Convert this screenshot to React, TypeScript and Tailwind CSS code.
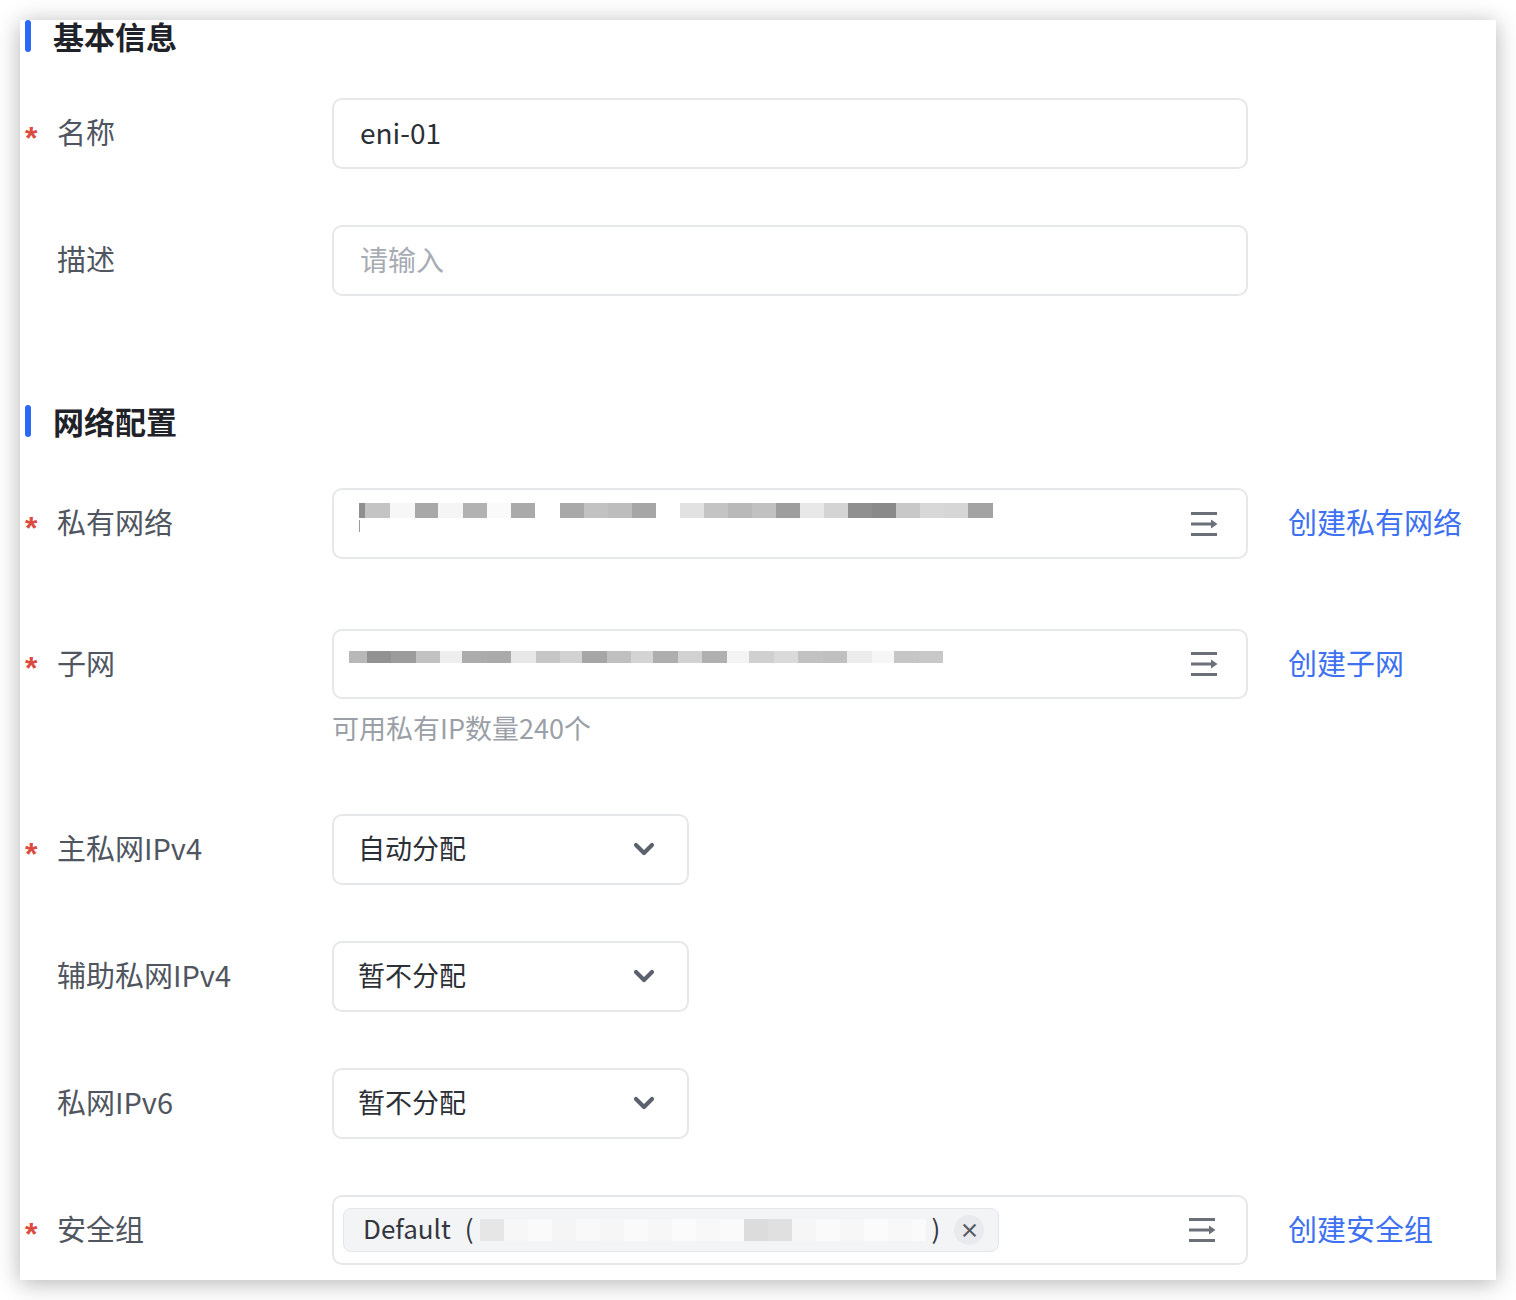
import React from "react";

type Blk = [number, string];

const vpcBlocks: Blk[] = [
  [6, "#8f8f8f"], [25, "#c4c4c4"], [25, "#f7f7f7"], [23, "#a8a8a8"], [25, "#f5f5f5"],
  [24, "#b2b2b2"], [24, "#fafafa"], [24, "#aaaaaa"], [25, "#ffffff"],
  [24, "#a9a9a9"], [24, "#c2c2c2"], [24, "#bdbdbd"], [24, "#a6a6a6"], [24, "#ffffff"],
  [24, "#e2e2e2"], [24, "#c4c4c4"], [24, "#b9b9b9"], [24, "#c1c1c1"], [24, "#9e9e9e"],
  [24, "#e8e8e8"], [24, "#d4d4d4"], [24, "#8f8f8f"], [24, "#8a8a8a"], [24, "#c8c8c8"],
  [24, "#d8d8d8"], [24, "#d6d6d6"], [25, "#a3a3a3"],
];

const subnetBlocks: Blk[] = [
  [18, "#b8b8b8"], [24, "#929292"], [25, "#9c9c9c"], [24, "#c2c2c2"], [22, "#eeeeee"],
  [25, "#acacac"], [24, "#aaaaaa"], [25, "#e8e8e8"], [24, "#c6c6c6"], [22, "#d2d2d2"],
  [25, "#a6a6a6"], [24, "#c0c0c0"], [22, "#d4d4d4"], [25, "#aeaeae"], [24, "#d2d2d2"],
  [25, "#b0b0b0"], [22, "#f4f4f4"], [25, "#d0d0d0"], [24, "#dadada"], [25, "#c2c2c2"],
  [24, "#c0c0c0"], [25, "#ececec"], [22, "#f6f6f6"], [25, "#c6c6c6"], [24, "#c8c8c8"],
];

const sgBlocks: Blk[] = [
  [24, "#e6e6e6"], [24, "#f7f7f7"], [24, "#fafafa"], [24, "#f5f5f5"], [24, "#f9f9f9"],
  [24, "#f6f6f6"], [24, "#fafafa"], [24, "#f7f7f7"], [24, "#fbfbfb"], [24, "#f8f8f8"],
  [24, "#fafafa"], [24, "#dcdcdc"], [24, "#e0e0e0"], [24, "#f6f6f6"], [24, "#fafafa"],
  [24, "#f7f7f7"], [24, "#fbfbfb"], [24, "#f8f8f8"], [14, "#fafafa"],
];

function Blocks({ data, h }: { data: Blk[]; h: string }) {
  return (
    <div className={`flex ${h}`}>
      {data.map(([w, c], i) => (
        <div key={i} className="h-full" style={{ width: w, background: c }} />
      ))}
    </div>
  );
}

function ListIcon() {
  return (
    <svg width="28" height="26" viewBox="0 0 28 26" fill="none" className="shrink-0">
      <path d="M1 2.5H27" stroke="#6a6f78" strokeWidth="3" />
      <path d="M1 13H23" stroke="#6a6f78" strokeWidth="3" />
      <path d="M21 8.5L27.5 13L21 17.5Z" fill="#6a6f78" />
      <path d="M1 23.5H27" stroke="#6a6f78" strokeWidth="3" />
    </svg>
  );
}

function Chevron() {
  return (
    <svg width="22" height="15" viewBox="0 0 22 15" fill="none" className="shrink-0">
      <path d="M3 3L11 11L19 3" stroke="#5c626d" strokeWidth="4.2" strokeLinecap="round" strokeLinejoin="round" />
    </svg>
  );
}

function Label({ req, children }: { req?: boolean; children: React.ReactNode }) {
  return (
    <div className="w-[312px] shrink-0 flex items-center pl-[5px]">
      <span className="w-[32px] shrink-0 text-[#dc4b40] text-[32px] font-['Liberation_Sans',sans-serif] font-bold leading-none relative top-[4px]">
        {req ? "*" : ""}
      </span>
      <span className="text-[29px] text-[#50565f] leading-none relative -top-[2px]">{children}</span>
    </div>
  );
}

function Header({ children }: { children: React.ReactNode }) {
  return (
    <div className="flex items-center h-[32px] shrink-0">
      <div className="w-[6px] h-[32px] bg-[#2b68f6] rounded-[3px] ml-[5px]" />
      <span className="ml-[22px] text-[31px] font-bold text-[#1f2329] leading-[28px]">{children}</span>
    </div>
  );
}

function Link({ children }: { children: React.ReactNode }) {
  return <span className="ml-[40px] text-[29px] text-[#3d71f2] leading-none relative -top-[2px]">{children}</span>;
}

function Select({ value }: { value: string }) {
  return (
    <div className="w-[357px] h-[71px] border-2 border-[#e6e7eb] rounded-[10px] flex items-center justify-between pl-[24px] pr-[32px]">
      <span className="text-[27px] text-[#2b2f36] leading-none relative -top-[2px]">{value}</span>
      <Chevron />
    </div>
  );
}

export default function App() {
  return (
    <div className="w-[1516px] h-[1300px] bg-white p-[20px] font-['Noto_Sans_CJK_SC','Noto_Sans',sans-serif]">
      <div className="w-[1476px] h-[1260px] bg-white overflow-hidden shadow-[0_3px_22px_rgba(0,0,0,0.3)] flex flex-col">
        <Header>基本信息</Header>

        <div className="flex items-center mt-[46px]">
          <Label req>名称</Label>
          <div className="w-[916px] h-[71px] border-2 border-[#e6e7eb] rounded-[10px] flex items-center px-[26px]">
            <span className="text-[28px] text-[#2b2f36] leading-none relative -top-[2px]">eni-01</span>
          </div>
        </div>

        <div className="flex items-center mt-[56px]">
          <Label>描述</Label>
          <div className="w-[916px] h-[71px] border-2 border-[#e6e7eb] rounded-[10px] flex items-center px-[26px]">
            <span className="text-[28px] text-[#a7abb3] leading-none relative -top-[2px]">请输入</span>
          </div>
        </div>

        <div className="mt-[109px]">
          <Header>网络配置</Header>
        </div>

        <div className="flex items-center mt-[51px]">
          <Label req>私有网络</Label>
          <div className="w-[916px] h-[71px] border-2 border-[#e6e7eb] rounded-[10px] flex items-start justify-between pl-[25px] pr-[28px]">
            <div className="flex flex-col pt-[13px]">
              <Blocks data={vpcBlocks} h="h-[15px]" />
              <div className="w-[1px] h-[12px] bg-[#9a9a9a] mt-[2px]" />
            </div>
            <div className="self-center">
              <ListIcon />
            </div>
          </div>
          <Link>创建私有网络</Link>
        </div>

        <div className="flex items-center mt-[70px]">
          <Label req>子网</Label>
          <div className="w-[916px] h-[70px] border-2 border-[#e6e7eb] rounded-[10px] flex items-start justify-between pl-[15px] pr-[28px]">
            <div className="pt-[20px]">
              <Blocks data={subnetBlocks} h="h-[12px]" />
            </div>
            <div className="self-center">
              <ListIcon />
            </div>
          </div>
          <Link>创建子网</Link>
        </div>

        <div className="ml-[312px] mt-[14px] text-[27px] text-[#9b9fa7] leading-[30px]">可用私有IP数量240个</div>

        <div className="flex items-center mt-[71px]">
          <Label req>主私网IPv4</Label>
          <Select value="自动分配" />
        </div>

        <div className="flex items-center mt-[56px]">
          <Label>辅助私网IPv4</Label>
          <Select value="暂不分配" />
        </div>

        <div className="flex items-center mt-[56px]">
          <Label>私网IPv6</Label>
          <Select value="暂不分配" />
        </div>

        <div className="flex items-center mt-[56px]">
          <Label req>安全组</Label>
          <div className="w-[916px] h-[70px] border-2 border-[#e6e7eb] rounded-[10px] flex items-center justify-between pl-[9px] pr-[30px]">
            <div className="w-[656px] h-[44px] bg-[#f3f4f6] border border-[#e4e6ea] rounded-[8px] flex items-center pl-[19px]">
              <span className="text-[26px] text-[#33373d] leading-none relative -top-[2px]">Default</span>
              <span className="ml-[14px] text-[26px] text-[#33373d] leading-none relative -top-[2px]">(</span>
              <div className="ml-[6px]">
                <Blocks data={sgBlocks} h="h-[22px]" />
              </div>
              <span className="ml-[6px] text-[26px] text-[#33373d] leading-none relative -top-[2px]">)</span>
              <div className="ml-[14px] w-[30px] h-[30px] rounded-full bg-[#e9eaee] flex items-center justify-center text-[20px] font-bold text-[#555a62] leading-none">
                ×
              </div>
            </div>
            <ListIcon />
          </div>
          <Link>创建安全组</Link>
        </div>
      </div>
    </div>
  );
}
